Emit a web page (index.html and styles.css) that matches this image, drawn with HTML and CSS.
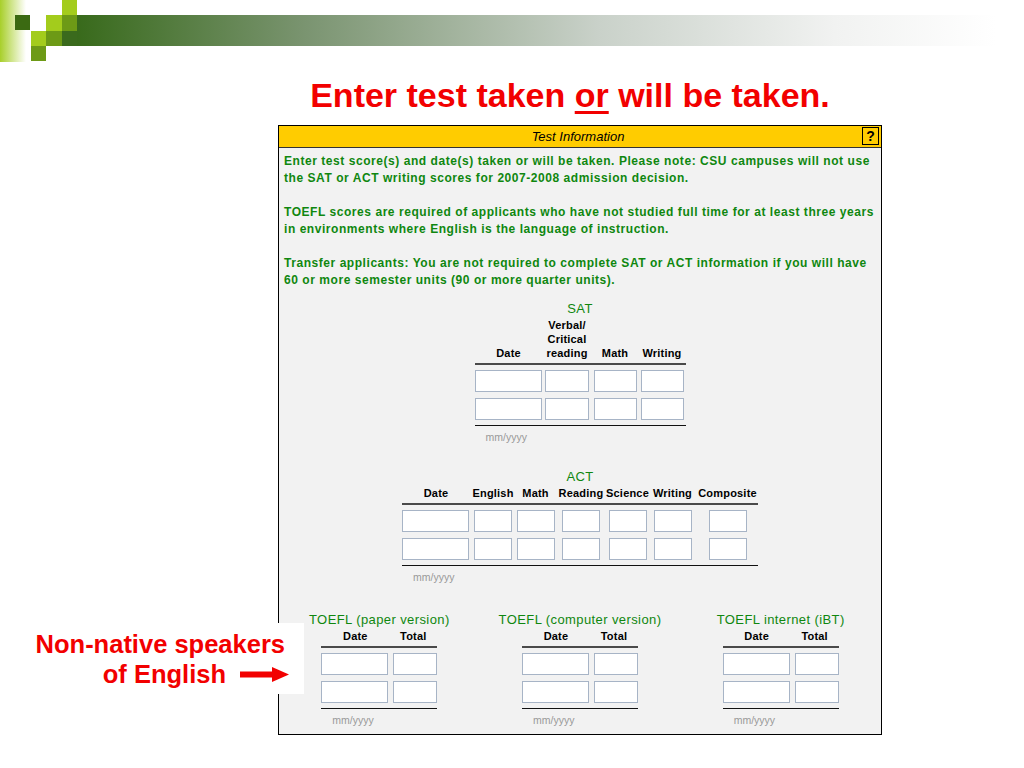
FILE: index.html
```html
<!DOCTYPE html>
<html lang="en">

<head>
    <meta charset="UTF-8">
    <meta name="viewport" content="width=device-width, initial-scale=1.0">
    <title>Test Information</title>
    <link rel="stylesheet" href="styles.css">
</head>

<body>
    <svg class="topbar" width="1024" height="62" viewBox="0 0 1024 62" aria-hidden="true">
        <defs>
            <linearGradient id="fadeLeft" x1="0" x2="1" y1="0" y2="0">
                <stop offset="0" stop-color="#a8cf2a" />
                <stop offset="1" stop-color="#ffffff" />
            </linearGradient>
            <linearGradient id="barFade" x1="0" x2="1" y1="0" y2="0">
                <stop offset="0" stop-color="#386a1b" />
                <stop offset="0.24" stop-color="#7a9470" />
                <stop offset="0.55" stop-color="#c9d1c9" />
                <stop offset="0.8" stop-color="#f1f2f1" />
                <stop offset="0.97" stop-color="#ffffff" />
            </linearGradient>
        </defs>
        <rect x="0" y="0" width="26" height="62" fill="url(#fadeLeft)" />
        <rect x="77" y="15" width="947" height="31" fill="url(#barFade)" />
        <rect x="15" y="15" width="15" height="15" fill="#3b6a12" />
        <rect x="46" y="15" width="16" height="16" fill="#a3cc1c" />
        <rect x="62" y="0" width="15" height="15" fill="#a3cc1c" />
        <rect x="62" y="15" width="15" height="16" fill="#6d9a16" />
        <rect x="62" y="31" width="15" height="15" fill="#3a6a1d" />
        <rect x="31" y="31" width="15" height="15" fill="#a3cc1c" />
        <rect x="46" y="31" width="16" height="15" fill="#6d9a16" />
        <rect x="31" y="46" width="15" height="15" fill="#6d9a16" />
    </svg>

    <main class="slide">
        <h1 class="slide-title">Enter test taken <u>or</u> will be taken.</h1>

        <section class="panel">
            <div class="panel-head">
                <span class="panel-title">Test Information</span>
                <span class="help">?</span>
            </div>

            <div class="panel-body">
                <p>Enter test score(s) and date(s) taken or will be taken. Please note: CSU campuses will not use
                    the SAT or ACT writing scores for 2007-2008 admission decision.</p>
                <p>TOEFL scores are required of applicants who have not studied full time for at least three years
                    in environments where English is the language of instruction.</p>
                <p>Transfer applicants: You are not required to complete SAT or ACT information if you will have
                    60 or more semester units (90 or more quarter units).</p>

                <!-- SAT -->
                <div class="test-block sat">
                    <div class="test-name">SAT</div>
                    <div class="scores sat-scores">
                        <span class="col-head">Date</span>
                        <span class="col-head">Verbal/<br>Critical<br>reading</span>
                        <span class="col-head">Math</span>
                        <span class="col-head">Writing</span>
                        <span class="rule-top"></span>
                        <input type="text" class="date-input"><input type="text" class="score-input w44"><input type="text" class="score-input"><input type="text" class="score-input">
                        <input type="text" class="date-input"><input type="text" class="score-input w44"><input type="text" class="score-input"><input type="text" class="score-input">
                        <span class="rule-bottom"></span>
                        <span class="hint">mm/yyyy</span>
                    </div>
                </div>

                <!-- ACT -->
                <div class="test-block act">
                    <div class="test-name">ACT</div>
                    <div class="scores act-scores">
                        <span class="col-head">Date</span>
                        <span class="col-head">English</span>
                        <span class="col-head">Math</span>
                        <span class="col-head">Reading</span>
                        <span class="col-head">Science</span>
                        <span class="col-head">Writing</span>
                        <span class="col-head">Composite</span>
                        <span class="rule-top"></span>
                        <input type="text" class="date-input"><input type="text" class="score-input"><input type="text" class="score-input"><input type="text" class="score-input"><input type="text" class="score-input"><input type="text" class="score-input"><input type="text" class="score-input">
                        <input type="text" class="date-input"><input type="text" class="score-input"><input type="text" class="score-input"><input type="text" class="score-input"><input type="text" class="score-input"><input type="text" class="score-input"><input type="text" class="score-input">
                        <span class="rule-bottom"></span>
                        <span class="hint">mm/yyyy</span>
                    </div>
                </div>

                <!-- TOEFL -->
                <div class="toefl-row">
                    <div class="test-block">
                        <div class="test-name">TOEFL (paper version)</div>
                        <div class="scores toefl-scores">
                            <span class="col-head">Date</span>
                            <span class="col-head">Total</span>
                            <span class="rule-top"></span>
                            <input type="text" class="date-input"><input type="text" class="score-input w44">
                            <input type="text" class="date-input"><input type="text" class="score-input w44">
                            <span class="rule-bottom"></span>
                            <span class="hint">mm/yyyy</span>
                        </div>
                    </div>
                    <div class="test-block">
                        <div class="test-name">TOEFL (computer version)</div>
                        <div class="scores toefl-scores">
                            <span class="col-head">Date</span>
                            <span class="col-head">Total</span>
                            <span class="rule-top"></span>
                            <input type="text" class="date-input"><input type="text" class="score-input w44">
                            <input type="text" class="date-input"><input type="text" class="score-input w44">
                            <span class="rule-bottom"></span>
                            <span class="hint">mm/yyyy</span>
                        </div>
                    </div>
                    <div class="test-block">
                        <div class="test-name">TOEFL internet (iBT)</div>
                        <div class="scores toefl-scores">
                            <span class="col-head">Date</span>
                            <span class="col-head">Total</span>
                            <span class="rule-top"></span>
                            <input type="text" class="date-input"><input type="text" class="score-input w44">
                            <input type="text" class="date-input"><input type="text" class="score-input w44">
                            <span class="rule-bottom"></span>
                            <span class="hint">mm/yyyy</span>
                        </div>
                    </div>
                </div>
            </div>
        </section>
    </main>

    <div class="callout">
        Non-native speakers<br>of English<svg class="arrow" width="49" height="15" viewBox="0 0 49 15"
            aria-hidden="true">
            <rect x="0" y="4.5" width="34" height="6" fill="#f20000" />
            <polygon points="32,0 49,7.5 32,15" fill="#f20000" />
        </svg>
    </div>
</body>

</html>
```

FILE: styles.css
```css
body {
    margin: 0;
    background: #ffffff;
    font-family: "Liberation Sans", Arial, sans-serif;
}

.topbar {
    display: block;
}

.slide {
    margin-left: 278px;
    width: 604px;
}

.slide-title {
    margin: 13px 0 10px;
    padding-right: 20px;
    font-size: 34px;
    line-height: 40px;
    font-weight: bold;
    color: #f20000;
    text-align: center;
}

.slide-title u {
    text-decoration-thickness: 3px;
    text-underline-offset: 4px;
}

.panel {
    border: 1px solid #000;
    background: #f2f2f2;
}

.panel-head {
    height: 21px;
    background: #ffcc00;
    border-bottom: 1px solid #333;
    display: flex;
    align-items: center;
    justify-content: center;
    position: relative;
}

.panel-title {
    font-size: 13px;
    font-style: italic;
    color: #000;
    padding-right: 4px;
}

.help {
    position: absolute;
    right: 2px;
    top: 1px;
    width: 15px;
    height: 16px;
    border: 1px solid #000;
    font-size: 14px;
    font-weight: bold;
    line-height: 16px;
    text-align: center;
}

.panel-body {
    padding: 5px 3px 8px 5px;
}

.panel-body p {
    margin: 0 0 18px;
    font-size: 12px;
    line-height: 16.5px;
    font-weight: bold;
    letter-spacing: 0.55px;
    color: #0f870f;
}

.panel-body p:last-of-type {
    margin-bottom: 0;
}

.test-block {
    display: flex;
    flex-direction: column;
    align-items: center;
}

.sat {
    margin-top: 13px;
    margin-right: 2px;
}

.act {
    margin-top: 26px;
    margin-right: 2px;
}

.toefl-row {
    display: grid;
    grid-template-columns: 1fr 1fr 1fr;
    margin: 29px -3px 0 -5px;
}

.test-name {
    font-size: 13px;
    line-height: 16px;
    letter-spacing: 0.4px;
    color: #0f870f;
}

.scores {
    display: grid;
    margin-top: 1px;
}

.sat-scores {
    grid-template-columns: 68px 49px 47px 47px;
}

.act-scores {
    grid-template-columns: 68px 46px 39px 52px 41px 49px 61px;
}

.toefl-scores {
    grid-template-columns: 68px 48px;
}

.col-head {
    align-self: end;
    justify-self: center;
    text-align: center;
    font-size: 11px;
    line-height: 14px;
    font-weight: bold;
    letter-spacing: 0.2px;
    color: #000;
}

.scores .col-head:first-child {
    justify-self: stretch;
}

.rule-top {
    grid-column: 1 / -1;
    height: 2px;
    margin: 3px 0 -1px;
    background: #4a4a4a;
}

.rule-bottom {
    grid-column: 1 / -1;
    height: 1px;
    margin-top: 5px;
    background: #111;
}

.scores input {
    box-sizing: border-box;
    height: 22px;
    margin: 6px 0 0;
    padding: 0 2px;
    border: 1px solid #a7b4c6;
    background: #fff;
    font-size: 11px;
}

.date-input {
    width: 67px;
    justify-self: start;
}

.score-input {
    width: 38px;
    justify-self: center;
}

.sat-scores .score-input {
    width: 43px;
}

.score-input.w44 {
    width: 44px;
    justify-self: end;
}

.sat-scores .score-input.w44 {
    justify-self: center;
}

.hint {
    grid-column: 1 / -1;
    margin-top: 5px;
    padding-left: 11px;
    font-size: 10.5px;
    line-height: 12px;
    color: #999;
}

.callout {
    position: absolute;
    left: 0;
    top: 623px;
    width: 304px;
    height: 71px;
    box-sizing: border-box;
    padding: 6px 19px 0 0;
    background: #fff;
    text-align: right;
    font-size: 25.5px;
    line-height: 30px;
    font-weight: bold;
    color: #f20000;
}

.arrow {
    margin-left: 14px;
    margin-right: -4px;
    vertical-align: 1px;
}
```
